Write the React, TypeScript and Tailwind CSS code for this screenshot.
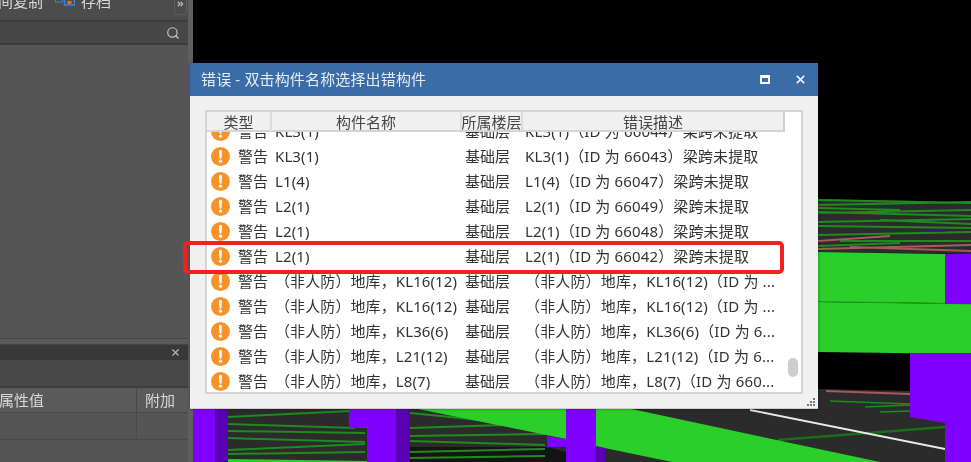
import { Search, X } from 'lucide-react'

const rows = [
  { name: 'KL3(1)', desc: 'KL3(1)（ID 为 66044）梁跨未提取' },
  { name: 'KL3(1)', desc: 'KL3(1)（ID 为 66043）梁跨未提取' },
  { name: 'L1(4)', desc: 'L1(4)（ID 为 66047）梁跨未提取' },
  { name: 'L2(1)', desc: 'L2(1)（ID 为 66049）梁跨未提取' },
  { name: 'L2(1)', desc: 'L2(1)（ID 为 66048）梁跨未提取' },
  { name: 'L2(1)', desc: 'L2(1)（ID 为 66042）梁跨未提取' },
  { name: '（非人防）地库，KL16(12)', desc: '（非人防）地库，KL16(12)（ID 为 ...' },
  { name: '（非人防）地库，KL16(12)', desc: '（非人防）地库，KL16(12)（ID 为 ...' },
  { name: '（非人防）地库，KL36(6)', desc: '（非人防）地库，KL36(6)（ID 为 6...' },
  { name: '（非人防）地库，L21(12)', desc: '（非人防）地库，L21(12)（ID 为 6...' },
  { name: '（非人防）地库，L8(7)', desc: '（非人防）地库，L8(7)（ID 为 660...' },
]

function WarnIcon() {
  return (
    <svg width="19" height="19" viewBox="0 0 19 19" className="shrink-0">
      <circle cx="9.5" cy="9.5" r="9.5" fill="#f7922b" />
      <path d="M8 4.2a1.5 1.5 0 0 1 3 0l-.5 6.6a1 1 0 0 1-2 0z" fill="#fff" />
      <circle cx="9.5" cy="14.2" r="1.6" fill="#fff" />
    </svg>
  )
}

function SaveIcon() {
  return (
    <svg width="20" height="10" viewBox="0 0 20 10" className="shrink-0">
      <rect x="0.5" y="-6" width="7" height="12" fill="none" stroke="#3f83c9" />
      <rect x="2" y="0" width="4" height="3" fill="#777" />
      <rect x="9.5" y="-6" width="10" height="15" fill="none" stroke="#3f83c9" strokeWidth="1.5" />
      <rect x="11" y="-4" width="7" height="6" fill="#ddd" />
      <rect x="12.5" y="5" width="4" height="3" fill="#e8701a" />
    </svg>
  )
}

function Scene() {
  return (
    <svg viewBox="193 0 778 462" className="absolute inset-0 h-full w-full">
      <rect x="193" y="0" width="778" height="462" fill="#000" />

      {/* floor */}
      <polygon points="818,199 971,202 971,254 818,252" fill="#2b2b2b" />
      <polygon points="818,389 971,392 971,462 193,462 193,408 818,408" fill="#2b2b2b" />
      <polygon points="410,447 547,447 566,452 566,462 410,462" fill="#141414" />

      {/* floor lines */}
      <g stroke="#1f8a1f" strokeWidth="2" fill="none">
        <path d="M818 200 L971 203 M818 205 L971 202 M818 213 L971 210 M818 208 L900 210 M818 212 L971 216" />
        <path d="M818 222 L971 219 M818 226 L971 228 M880 220 L971 224 M818 235 L971 232 M840 241 L971 241 M818 246 L900 243" />
        <path d="M228 417 L350 411 M228 424 L355 428 M228 431 L365 433 M228 438 L365 442 M228 450 L365 444 M228 454 L365 452" />
        <path d="M410 413 L480 420 M410 428 L540 424 M410 436 L545 434 M410 441 L545 445 M410 452 L545 449 M410 458 L545 456" />
        <path d="M830 401 L910 404 M865 407 L910 405 M880 412 L910 411" strokeWidth="1.4" />
        <path d="M778 440 L945 427" strokeWidth="2.5" stroke="#1a6e1a" />
      </g>
      <g stroke="#a85a5a" strokeWidth="2" fill="none">
        <path d="M818 241 L890 236 M818 249 L971 245 M850 247 L971 251" />
        <path d="M826 391 L910 394" />
      </g>
      <path d="M920 231 L945 231" stroke="#5a00b4" strokeWidth="1.5" />
      <path d="M750 410 L945 449" stroke="#e8e8e8" strokeWidth="1.8" fill="none" />

      {/* green beams */}
      <polygon points="818,252 945,254 945,303 818,302" fill="#2acf2a" />
      <polygon points="818,302 971,304 971,354 818,352" fill="#2acf2a" />
      <path d="M818 301.5 L971 304" stroke="#1f9a1f" strokeWidth="1" />
      <polygon points="595,408 627,408 880,462 672,462 595,446" fill="#2acf2a" />
      <polygon points="413,408 566,408 566,439" fill="#2acf2a" />
      <polygon points="228,459 367,461 367,462 228,462" fill="#2acf2a" />

      {/* purple columns */}
      <rect x="945" y="254" width="26" height="50" fill="#8000ff" />
      <polygon points="910,353 971,353 971,462 945,462 945,423 910,417" fill="#8000ff" />

      <rect x="193" y="408" width="22" height="54" fill="#8000ff" />
      <rect x="215" y="408" width="13" height="54" fill="#5a00b4" />
      <polygon points="349,408 396,408 396,462 367,462 367,428 349,428" fill="#8000ff" />
      <rect x="396" y="408" width="14" height="54" fill="#5a00b4" />
      <polygon points="547,436 566,439 566,447 547,447" fill="#8000ff" />
      <rect x="566" y="408" width="30" height="54" fill="#8000ff" />
      <polygon points="595,446 605,448 605,462 595,462" fill="#5a00b4" />
    </svg>
  )
}

export default function App() {
  return (
    <div className="relative flex h-[462px] w-[971px] overflow-hidden bg-black font-['Noto_Sans','Noto_Sans_CJK_SC',sans-serif] text-[15px] blur-[0.4px]">
      <aside className="flex h-full w-[193px] shrink-0 flex-col border-r-[5px] border-[#5f5f5f] bg-[#555555] text-[#d8d8d8]">
        <div className="flex h-[22px] shrink-0 justify-between border-b-2 border-[#3d3d3d] bg-[#4c4c4c]">
          <div className="-mt-[9px] flex h-[20px] items-center whitespace-nowrap">
            <span className="-ml-[2px]">间复制</span>
            <span className="ml-[12px] mr-[6px]"><SaveIcon /></span>
            <span>存档</span>
          </div>
          <div className="mr-[1px] h-[15px] w-[13px] rounded-b border border-t-0 border-[#5d5d5d] pl-[2px] text-[11px] font-bold leading-[6px] text-[#bbb]">»</div>
        </div>
        <div className="flex h-[23px] shrink-0 items-center justify-end border-b-2 border-[#3b3b3b] bg-[#474747] pr-[8px]">
          <Search size={14} strokeWidth={2} className="text-[#c8c8c8]" />
        </div>
        <div className="h-[293px] shrink-0 bg-[#555555]" />
        <div className="h-[7px] shrink-0 border-y border-[#454545] bg-[#5a5a5a]" />
        <div className="flex h-[15px] shrink-0 items-center justify-end bg-[#383838] pr-[7px]">
          <X size={11} strokeWidth={2.5} className="text-[#b8b8b8]" />
        </div>
        <div className="h-[28px] shrink-0 border-b-2 border-[#3e3e3e] bg-[#484848]" />
        <div className="flex h-[25px] shrink-0 border-b border-[#484848] bg-[#5a5a5a]">
          <div className="flex-1 border-r border-[#474747] leading-[25px]">
            <span className="-ml-[1px]">属性值</span>
          </div>
          <div className="w-[51px] pl-[8px] leading-[25px]">附加</div>
        </div>
        <div className="flex h-[27px] shrink-0 border-b border-[#484848] bg-[#555555]">
          <div className="flex-1 border-r border-[#4a4a4a]" />
          <div className="w-[51px]" />
        </div>
        <div className="flex-1 bg-[#555555]" />
      </aside>

      <main className="relative flex-1">
        <Scene />
      </main>

      {/* floating dialog */}
      <div className="absolute left-[190px] top-[63px] flex h-[346px] w-[628px] flex-col border-b border-[#cfcfcf] bg-[#f0f0f0] shadow-[0_0_3px_rgba(0,0,0,0.4)]">
        <div className="flex h-[33px] shrink-0 items-center justify-between bg-[#3a6ca7] pl-[11px] text-[#e6edf5]">
          <span className="tracking-[0.15px]">错误 - 双击构件名称选择出错构件</span>
          <div className="flex items-center gap-[24px] pr-[11px]">
            <span className="h-[9px] w-[10px] border-2 border-t-[3px] border-white" />
            <X size={13} strokeWidth={3} className="text-white" />
          </div>
        </div>
        <div className="relative mx-[15px] mt-[14px] flex h-[284px] flex-col overflow-hidden border-2 border-[#d4d4d4] bg-white">
          <div className="flex h-[20px] w-[578px] shrink-0 items-center border-b-2 border-[#d4d4d4] bg-[#f0f0f0] text-[#444]">
            <div className="flex h-[20px] w-[65px] items-center justify-center border-r-2 border-[#dcdcdc] pt-[2px]">类型</div>
            <div className="flex h-[20px] w-[190px] items-center justify-center border-r-2 border-[#dcdcdc] pt-[2px]">构件名称</div>
            <div className="flex h-[20px] w-[61px] items-center justify-center whitespace-nowrap border-r-2 border-[#dcdcdc] pt-[2px]">所属楼层</div>
            <div className="flex h-[20px] flex-1 items-center justify-center border-r-2 border-[#cfcfcf] pt-[2px]">错误描述</div>
          </div>
          <div className="min-h-0 flex-1 overflow-hidden">
            <div className="-mt-[13px] text-[#333]">
              {rows.map((r, i) => (
                <div key={i} className="flex h-[25px] items-center whitespace-nowrap">
                  <div className="flex w-[23px] justify-end"><WarnIcon /></div>
                  <span className="ml-[8px] w-[37px]">警告</span>
                  <span className="w-[190px] tracking-[0.1px]">{r.name}</span>
                  <span className="w-[60px]">基础层</span>
                  <span className="tracking-[0.15px]">{r.desc}</span>
                </div>
              ))}
            </div>
          </div>
          <div className="absolute bottom-[15px] right-[3px] h-[19px] w-[10px] rounded-full bg-[#cdcdcd]" />
        </div>
        <div className="absolute bottom-[2px] right-[3px] grid grid-cols-3 gap-[1px]">
          {[0, 0, 1, 0, 1, 1, 1, 1, 1].map((on, i) => (
            <span key={i} className={on ? 'h-[2px] w-[2px] bg-[#777]' : 'h-[2px] w-[2px]'} />
          ))}
        </div>
      </div>

      {/* red annotation box */}
      <div className="absolute left-[183px] top-[241px] h-[33px] w-[601px] rounded-[5px] border-4 border-[#f5201c]" />
    </div>
  )
}
